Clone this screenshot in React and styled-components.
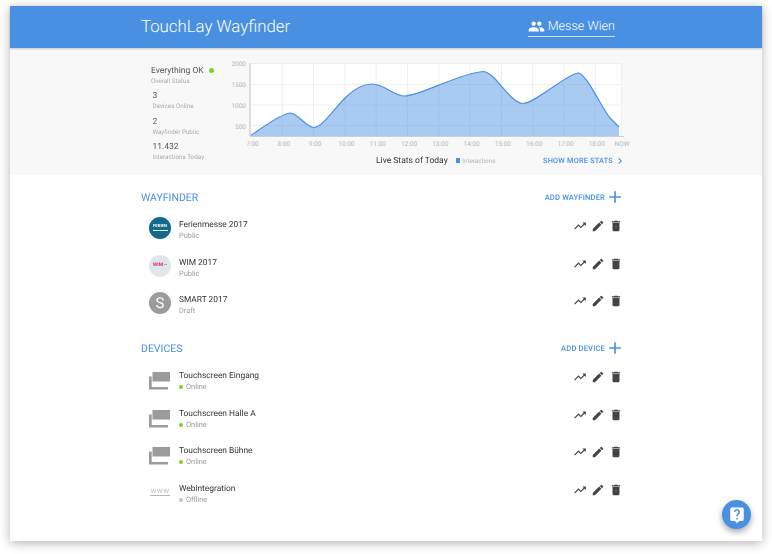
import React from 'react'
import styled, { createGlobalStyle } from 'styled-components'
import {
  MdPeople,
  MdTrendingUp,
  MdEdit,
  MdDelete,
  MdAdd,
  MdChevronRight,
  MdLiveHelp,
} from 'react-icons/md'

const GlobalStyle = createGlobalStyle`
  body {
    margin: 0;
    min-height: 554px;
    background: #fff;
    font-family: Roboto, "Liberation Sans", sans-serif;
    text-rendering: geometricPrecision;
  }
  #root {
    padding: 6px 10px 13px;
  }
`

const Card = styled.div`
  position: relative;
  width: 752px;
  height: 535px;
  background: #fff;
  box-shadow: 0 2px 10px rgba(0, 0, 0, 0.3);
`

const Header = styled.header`
  position: relative;
  display: flex;
  align-items: center;
  justify-content: space-between;
  box-sizing: border-box;
  height: 42px;
  padding: 0 147px 0 131px;
  background: #4a90e2;
  color: #fff;
  box-shadow: 0 1px 2px rgba(0, 0, 0, 0.2);
`

const Title = styled.h1`
  margin: 0;
  font-size: 16.8px;
  font-weight: 300;
`

const Location = styled.a`
  display: flex;
  align-items: center;
  gap: 3px;
  padding: 1px 0;
  border-bottom: 1px solid #cfe2f8;
  font-size: 12.6px;
  font-weight: 300;
  line-height: 16px;
  svg {
    font-size: 17px;
  }
`

const StatsBand = styled.section`
  display: flex;
  box-sizing: border-box;
  height: 127px;
  padding: 8px 130px 0 131px;
  background: #f8f8f8;
`

const StatusList = styled.div`
  display: flex;
  flex-direction: column;
  gap: 4.5px;
  box-sizing: border-box;
  width: 85px;
  padding: 8.5px 0 0 10px;
  will-change: opacity;
`

const Stat = styled.div`
  padding-left: ${props => (props.$first ? 0 : 1.5)}px;
`

const StatValue = styled.div`
  display: flex;
  align-items: center;
  gap: 5px;
  color: #555;
  font-size: 8.5px;
  line-height: 12px;
`

const StatLabel = styled.div`
  color: #aaa;
  font-size: 6.3px;
  line-height: 9px;
`

const Dot = styled.span`
  width: ${props => props.$size}px;
  height: ${props => props.$size}px;
  border-radius: 50%;
  background: ${props => props.$color};
`

const ChartColumn = styled.div`
  width: 406px;
`

const ChartSvg = styled.svg`
  display: block;
  width: 406px;
  height: 92px;
  text {
    fill: #b4b4b4;
    font-size: 6.5px;
    font-family: Roboto, "Liberation Sans", sans-serif;
  }
`

const ChartFooter = styled.div`
  display: flex;
  align-items: center;
  height: 25px;
  padding: 0 6px 0 150px;
  will-change: opacity;
`

const ChartCaption = styled.span`
  color: #333;
  font-size: 8.5px;
`

const Legend = styled.span`
  display: flex;
  align-items: center;
  gap: 2px;
  margin-left: 8px;
  color: #b4b4b4;
  font-size: 6.3px;
  &::before {
    content: '';
    width: 4.5px;
    height: 4.5px;
    background: #4a90e2;
  }
`

const MoreLink = styled.a`
  display: flex;
  align-items: center;
  margin-left: auto;
  color: #4a90e2;
  font-size: 7.35px;
  font-weight: 500;
  letter-spacing: 0.2px;
  svg {
    font-size: 12px;
    margin-left: 1px;
  }
`

const Section = styled.section`
  box-sizing: border-box;
  height: 151px;
  padding: 5px 141px 0 131px;
  will-change: opacity;
`

const SectionHead = styled.div`
  display: flex;
  align-items: center;
  justify-content: space-between;
  height: 34px;
  margin-bottom: 5px;
`

const SectionTitle = styled.h2`
  margin: 0;
  color: #4a90e2;
  font-size: 10.5px;
  font-weight: 400;
`

const AddLink = styled.a`
  display: flex;
  align-items: center;
  gap: 0;
  margin-right: -4px;
  color: #4a90e2;
  font-size: 7.6px;
  font-weight: 500;
  letter-spacing: 0.15px;
  svg {
    font-size: 20px;
  }
`

const Row = styled.div`
  display: flex;
  align-items: flex-start;
  box-sizing: border-box;
  height: 37.5px;
  padding-left: 8px;
`

const Avatar = styled.div`
  display: flex;
  flex-direction: column;
  align-items: center;
  justify-content: center;
  flex: none;
  width: 22px;
  height: 22px;
  margin-top: -2px;
  border-radius: 50%;
  background: ${props => props.$bg};
  color: ${props => props.$color};
  font-size: ${props => props.$size}px;
  font-weight: ${props => props.$weight};
  line-height: 1;
`

const AvatarRule = styled.span`
  width: 15px;
  height: 1px;
  margin-top: 1px;
  background: #fff;
`

const WimAccent = styled.span`
  display: inline-block;
  width: 3px;
  height: 1px;
  margin-left: 1px;
  vertical-align: middle;
  background: #a5c83c;
`

const DeviceIcon = styled.div`
  display: flex;
  align-items: center;
  justify-content: ${props => (props.$web ? 'center' : 'flex-start')};
  flex: none;
  width: 22px;
  height: 22px;
  margin-top: ${props => (props.$web ? -2 : 0)}px;
  color: #9b9b9b;
`

const WwwMark = styled.span`
  border-bottom: 1px solid #b5b5b5;
  color: #a8a8a8;
  font-size: 8px;
  font-weight: 300;
  letter-spacing: 0.3px;
  line-height: 8px;
`

const RowText = styled.div`
  margin: 1px 0 0 8px;
`

const RowName = styled.div`
  color: #333;
  font-size: 8.4px;
  line-height: 11px;
`

const RowSub = styled.div`
  display: flex;
  align-items: center;
  gap: 3px;
  color: #9b9b9b;
  font-size: 7.4px;
  line-height: 10px;
`

const Actions = styled.div`
  display: flex;
  align-items: center;
  gap: 4px;
  margin: 0 -2px 0 auto;
  color: #444;
  font-size: 14px;
`

const HelpButton = styled.button`
  position: absolute;
  right: 11px;
  bottom: 12px;
  display: flex;
  align-items: center;
  justify-content: center;
  width: 29px;
  height: 29px;
  padding: 0;
  border: none;
  border-radius: 50%;
  background: #4a90e2;
  color: #fff;
  font-size: 18px;
  box-shadow: 0 3px 6px rgba(0, 0, 0, 0.35);
`

const yLabels = [
  ['2000', 66],
  ['1500', 87],
  ['1000', 108],
  ['500', 129],
]
const hours = [
  '7:00', '8:00', '9:00', '10:00', '11:00', '12:00', '13:00',
  '14:00', '15:00', '16:00', '17:00', '18:00',
]

const curve =
  'M250 136 C262 128 280 114 290 113 C298 113 306 127.5 314 127.5 C322 127.5 335 108 345 98 C353 90 362 84 372 84 C385 84 393 96 405 96 C420 96 460 73 483 71.5 C495 71.5 510 103.5 523 103.5 C535 103.5 565 75 578 73 C586 73 600 105 610 118 L619 127'

const Chart = () => (
  <ChartSvg viewBox="226 56 406 92">
    <rect x="250" y="63" width="371.5" height="73" fill="#fff" />
    {hours.slice(1).map((h, i) => (
      <line key={h} x1={282.3 + i * 31.3} x2={282.3 + i * 31.3} y1="63" y2="136" stroke="#eee" />
    ))}
    <line x1="621.5" x2="621.5" y1="63" y2="136" stroke="#eee" />
    {[63.5, 84.5, 105, 125.5].map(y => (
      <line key={y} x1="250" x2="622" y1={y} y2={y} stroke="#eee" />
    ))}
    <path d={curve + ' L619 136 Z'} fill="#4a90e2" fillOpacity="0.47" />
    <path d={curve} fill="none" stroke="#4a90e2" strokeWidth="1.2" />
    <line x1="250" x2="250" y1="63" y2="136" stroke="#d4d4d4" strokeWidth="1.5" />
    <line x1="250" x2="624" y1="136.5" y2="136.5" stroke="#cfcfcf" />
    {yLabels.map(([label, y]) => (
      <text key={label} x="246" y={y} textAnchor="end">{label}</text>
    ))}
    {hours.map((h, i) => (
      <text key={h} x={252.5 + i * 31.3} y="146" textAnchor="middle">{h}</text>
    ))}
    <text x="622" y="146" textAnchor="middle">NOW</text>
  </ChartSvg>
)

const Screen = () => (
  <svg width="21" height="18" viewBox="0 0 21 18" fill="currentColor">
    <rect x="3.5" y="0" width="17.5" height="9.5" />
    <path d="M0 4.5h2.7V15H19v2.5H0z" />
  </svg>
)

const RowActions = () => (
  <Actions>
    <MdTrendingUp />
    <MdEdit />
    <MdDelete />
  </Actions>
)

const wayfinders = [
  {
    name: 'Ferienmesse 2017',
    sub: 'Public',
    avatar: (
      <>
        FERIEN
        <AvatarRule />
      </>
    ),
    bg: '#0f6a8d',
    color: '#fff',
    size: 4.2,
    weight: 700,
  },
  {
    name: 'WIM 2017',
    sub: 'Public',
    avatar: (
      <span>
        WIM
        <WimAccent />
      </span>
    ),
    bg: '#e2e5ec',
    color: '#d8316f',
    size: 5,
    weight: 700,
  },
  { name: 'SMART 2017', sub: 'Draft', avatar: 'S', bg: '#9b9b9b', color: '#fff', size: 15, weight: 400 },
]

const devices = [
  { name: 'Touchscreen Eingang', online: true },
  { name: 'Touchscreen Halle A', online: true },
  { name: 'Touchscreen Bühne', online: true },
  { name: 'Webintegration', online: false, web: true },
]

export default function App() {
  return (
    <>
      <GlobalStyle />
      <Card>
        <Header>
          <Title>TouchLay Wayfinder</Title>
          <Location>
            <MdPeople />
            Messe Wien
          </Location>
        </Header>

        <StatsBand>
          <StatusList>
            <Stat $first>
              <StatValue>
                Everything OK
                <Dot $size={5} $color="#7ed321" />
              </StatValue>
              <StatLabel>Overall Status</StatLabel>
            </Stat>
            <Stat>
              <StatValue>3</StatValue>
              <StatLabel>Devices Online</StatLabel>
            </Stat>
            <Stat>
              <StatValue>2</StatValue>
              <StatLabel>Wayfinder Public</StatLabel>
            </Stat>
            <Stat>
              <StatValue>11.432</StatValue>
              <StatLabel>Interactions Today</StatLabel>
            </Stat>
          </StatusList>
          <ChartColumn>
            <Chart />
            <ChartFooter>
              <ChartCaption>Live Stats of Today</ChartCaption>
              <Legend>Interactions</Legend>
              <MoreLink>
                SHOW MORE STATS
                <MdChevronRight />
              </MoreLink>
            </ChartFooter>
          </ChartColumn>
        </StatsBand>

        <Section>
          <SectionHead>
            <SectionTitle>WAYFINDER</SectionTitle>
            <AddLink>
              ADD WAYFINDER
              <MdAdd />
            </AddLink>
          </SectionHead>
          {wayfinders.map(w => (
            <Row key={w.name}>
              <Avatar $bg={w.bg} $color={w.color} $size={w.size} $weight={w.weight}>
                {w.avatar}
              </Avatar>
              <RowText>
                <RowName>{w.name}</RowName>
                <RowSub>{w.sub}</RowSub>
              </RowText>
              <RowActions />
            </Row>
          ))}
        </Section>

        <Section>
          <SectionHead>
            <SectionTitle>DEVICES</SectionTitle>
            <AddLink>
              ADD DEVICE
              <MdAdd />
            </AddLink>
          </SectionHead>
          {devices.map(d => (
            <Row key={d.name}>
              <DeviceIcon $web={d.web}>{d.web ? <WwwMark>www</WwwMark> : <Screen />}</DeviceIcon>
              <RowText>
                <RowName>{d.name}</RowName>
                <RowSub>
                  <Dot $size={4} $color={d.online ? '#7ed321' : '#c4c4c4'} />
                  {d.online ? 'Online' : 'Offline'}
                </RowSub>
              </RowText>
              <RowActions />
            </Row>
          ))}
        </Section>

        <HelpButton>
          <MdLiveHelp />
        </HelpButton>
      </Card>
    </>
  )
}
